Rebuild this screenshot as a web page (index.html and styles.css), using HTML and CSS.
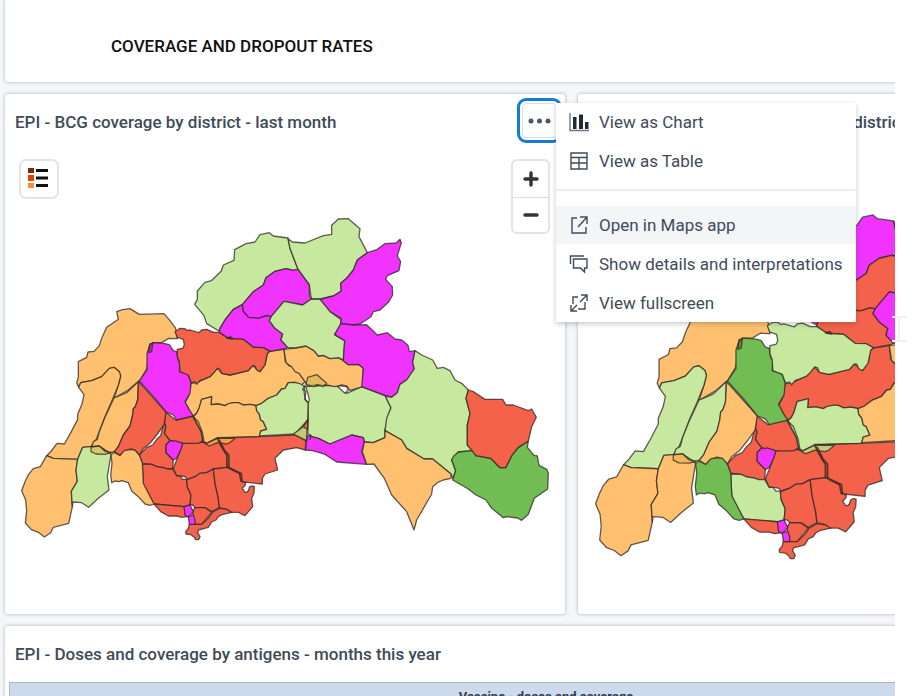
FILE: index.html
```html
<!DOCTYPE html>
<html lang="en">
<head>
<meta charset="utf-8">
<title>EPI dashboard</title>
<link rel="stylesheet" href="styles.css">
</head>
<body>
<main class="dashboard">
  <section class="card card-heading">
    <h1>COVERAGE AND DROPOUT RATES</h1>
  </section>

  <div class="map-row">
    <section class="card map-card">
      <header class="card-header">
        <h2>EPI - BCG coverage by district - last month</h2>
        <div class="actions">
          <button class="more" type="button" aria-label="More options" aria-expanded="true">
            <svg width="24" height="6" viewBox="0 0 24 6"><circle cx="3" cy="3" r="2.5"/><circle cx="11.500" cy="3" r="2.5"/><circle cx="20" cy="3" r="2.5"/></svg>
          </button>
          <div class="menu">
            <button type="button"><svg viewBox="0 0 20 20"><path class="axis" d="M1 1v17.500h19"/><path class="solid" d="M4 5h3.500v12H4zM10 2.500h4V17h-4zM16 10h3.500v7H16z"/></svg>View as Chart</button>
            <button type="button"><svg viewBox="0 0 20 20"><path d="M2 2h16v16H2zM2 6.500h16M2 12h16M10 6.500V18"/></svg>View as Table</button>
            <hr>
            <button type="button" class="active"><svg viewBox="0 0 20 20"><path d="M8 3H3v15h14v-6M11 2h7v7M18 2L9 12"/></svg>Open in Maps app</button>
            <button type="button"><svg viewBox="0 0 20 20"><path d="M1.500 10V2H15M4.500 5H18v9h-2.500v4l-4-4h-7z"/></svg>Show details and interpretations</button>
            <button type="button"><svg viewBox="0 0 20 20"><path d="M9 4H4v7M9 16h7V9M12 2h6v6M18 2l-7 7M2 12v6h6M2 18l6-6"/></svg>View fullscreen</button>
          </div>
        </div>
      </header>
      <div class="map">
        <svg class="districts" viewBox="45 450 1620 1365" role="img" aria-label="Coverage by district">
          <g id="districts">
            <g transform="translate(390 1110)">
              <path class="f-or" d="M412-50L420-56 462-62 466-25 478-12 495-10 512 15 525 35 515 45 495 37 475 38 465 55 455 57 440 75 415 85 395 100 380 107 360 103 340 105 325 98 310 98 285 107 265 102 243 104 245 80 215 88 207 115 200 130 188 138 175 115 165 98 175 80 183 40 200 38 240 20 262-5 275 10 300 15 355 2 368-13 390 5 405-18Z"/>
              <path class="f-og" d="M245 80L243 104 265 102 285 107 295 101 310 98 325 98 340 105 360 103 378 107 380 122 388 132 392 150 400 155 410 178 392 183 388 200 300 202 262 203 230 220 218 212 213 185 190 140 200 130 207 115 215 88Z"/>
              <path class="f-go" d="M378 107L395 100 415 85 440 75 455 57 465 55 475 38 495 37 512 42 525 50 522 65 527 90 535 100 533 150 495 192 388 198 392 183 410 178 400 155 392 150 388 132 380 122Z"/>
              <path class="f-gg" d="M527 50L560 48 580 46 620 47 635 55 650 70 695 50 766 78 783 113 773 145 765 180 765 203 730 218 703 216 700 203 665 195 600 222 565 205 545 200 533 190 535 150 535 100 538 88 532 65Z"/>
              <path class="f-mm" d="M533 196L545 200 565 205 600 222 665 195 700 203 703 216 695 245 710 283 620 276 585 253 548 242 526 240Z"/>
              <path class="f-rr" d="M262 205L300 203 388 200 495 195 527 212 526 240 500 233 460 240 435 265 443 300 405 312 397 325 397 342 335 335 330 312 296 292 295 260 280 240Z"/>
              <path class="f-rr" d="M158 220L215 216 230 220 262 207 280 240 292 258 292 292 250 297 230 308 210 310 195 320 172 328 165 320 150 318 140 318 130 295 140 270Z"/>
              <path class="f-rr" d="M107 126L137 150 187 138 213 185 218 213 205 220 160 220 120 212 103 190 107 170 103 160Z"/>
              <path class="f-rr" d="M103 155L107 170 103 190 120 212 108 225 108 248 130 270 128 297 112 297 100 293 80 290 65 283 37 280 28 255 50 232 68 225 80 208 92 197Z"/>
              <path class="f-rg" d="M37 282L65 283 80 290 100 293 112 297 128 297 140 318 150 318 158 328 170 328 172 350 183 375 180 405 162 410 72 402 40 345Z"/>
              <path class="f-rr" d="M170 330L195 320 210 310 230 308 250 297 255 340 265 385 268 413 245 425 225 413 195 413 188 405 180 405 183 375 172 350Z"/>
              <path class="f-rr" d="M250 297L292 292 305 300 330 312 335 335 347 338 346 345 337 355 345 367Q356 368 358 352Q365 345 373 350L372 370 365 385 368 410 345 437 325 427 300 427 290 418 268 413 265 385 255 340Z"/>
              <path class="f-rr" d="M72 402L162 410 170 440 155 442 140 438 115 438 92 425Z"/>
              <path class="f-rr" d="M195 413L225 413 245 427 215 463 195 463 190 445 188 425Z"/>
              <path class="f-rr" d="M178 463L215 463 235 445 247 427 268 415 290 418 305 427 275 434 265 440 258 450 245 456 235 472 205 480 203 488 210 500 206 509 197 509 193 502 183 494 168 492 167 485 175 475Z"/>
              <path class="f-mm" d="M120 212L128 214 135 212 158 220 152 240 140 265 130 270 108 248 108 225Z"/>
              <path class="f-mm" d="M162 410L180 405 190 425 175 442 165 435Z"/>
              <path class="f-mm" d="M175 440L190 435 195 450 195 463 178 463Z"/>
              <path class="f-lens" d="M215 214L230 220 262 205 315 205 300 218 290 222 262 218 238 228Z"/>
              <path class="f-seam" d="M262 207L280 240 290 255 290 292 297 292 297 255 285 242 270 212Z"/>
              <path class="f-seam" d="M296 292L328 308 332 333 337 335 334 310Z"/>
              <path class="f-khaki" d="M490 192L520 170 533 150 529 212Z"/>
              <path class="f-rr" d="M520 170L533 150 533 178Z"/>
              <path class="f-none" d="M190 140L205 155 218 190 222 214M525 45L518 58 528 64 524 88 533 96M540 210L543 193"/>
              <path class="f-water" d="M620 47L650 50 655 60 645 70Z"/>
            </g>
            <g transform="translate(30 900)">
              <path class="f-oo" d="M205 185L230 172 234 156 252 154 268 137 275 115 290 82 325 58 320 35 338 29 360 26 388 43 462 41 480 62 497 85 502 116 476 115 455 128 428 128 418 140 411 205 390 240 355 270 312 295 325 255 332 228 328 215 312 202 298 205 275 230 245 242 212 248 206 262 200 248 205 232Z"/>
              <path class="f-og" d="M206 262L212 248 245 242 275 230 298 205 312 202 328 215 332 228 325 255 308 297 285 350 266 400 258 420 243 440 218 442 203 478 130 475 110 467 124 453 141 430 163 432 184 395 203 358 203 343 216 312 222 284Z"/>
              <path class="f-og" d="M312 294L350 278 385 245 383 300 376 320 370 326 368 345 360 378 340 405 325 440 313 455 298 458 270 440 245 441 250 425 262 418 268 395 285 352Z"/>
              <path class="f-oo" d="M110 467L130 475 203 478 198 510 202 544 184 574 187 620 176 670 130 682 122 698 103 711 85 697 64 689 46 669 50 632 47 600 35 572 45 545 55 524 70 506 91 500Z"/>
              <path class="f-go" d="M218 442L243 440 268 438 285 455 303 462 297 500 292 530 297 570 265 595 236 622 215 608 189 606 187 620 184 574 202 544 198 510 203 478Z"/>
              <path class="f-od" d="M303 465L308 459 313 458 330 466 343 450 375 448 388 465 397 490 400 550 432 612 420 616 405 612 385 590 365 573 355 548 335 542 327 545 315 543 305 548 302 525 306 490Z"/>
              <path class="f-ro" d="M386 245L468 336 462 375 440 405 420 430 400 445 388 465 375 450 360 447 343 452 330 466 313 455 325 440 340 405 360 378 368 345 370 326 376 320 383 300Z"/>
              <path class="f-md" d="M428 128L460 130 478 134 490 152 500 155 504 180 510 190 508 215 525 220 535 225 543 248 540 280 525 305 538 330 550 348 500 360 490 345 468 336 435 295 388 243 411 210 411 160 418 140Z"/>
              <path class="f-lens2" d="M243 441L268 438 285 453 303 458 285 463 258 462 243 455Z"/>
              <path class="f-seam2" d="M419 132L428 130 425 155 416 158Z"/>
            </g>
            <g transform="translate(540 630)">
              <path class="f-oo" d="M312 418L345 414 378 408 402 422 415 438 430 436 450 446 475 443 490 452 505 464 535 463 550 475 548 530 510 541 500 528 485 525 465 530 440 525 380 525 375 515 357 490 345 485 335 470 318 458Z"/>
              <path class="f-gm" d="M324 84L280 78 268 68 240 74 225 96 198 101 164 119 162 151 130 165 124 183 94 212 75 217 52 243 52 268 44 283 72 317 80 341 117 363 120 355 135 330 160 298 187 284 220 245 250 225 258 203 285 184 318 176 340 181 354 178 340 142 330 115Z"/>
              <path class="f-go" d="M324 86L337 96 375 99 430 77 455 73 455 46 475 27 505 26 540 56 537 80 562 128 532 150 520 180 500 205 482 220 484 243 460 258 420 267 394 267 388 225 354 178 330 115Z"/>
              <path class="f-mm" d="M562 128L590 119 614 101 648 99 660 88 664 98 652 138 662 155 657 182 622 197 617 208 637 230 638 255 625 277 600 300 580 305 573 320 540 342 520 345 482 341 484 326 450 305 420 268 460 258 484 243 482 220 500 205 520 180 532 150Z"/>
              <path class="f-mr" d="M354 178L388 225 388 255 394 267 368 285 312 274 275 320 260 317 235 325 205 322 189 303 187 284 220 245 250 225 258 203 285 184 318 176 340 181Z"/>
              <path class="f-mr" d="M187 284L189 303 205 322 235 325 260 317 275 320 268 332 285 355 308 372 303 390 323 410 318 415 270 424 250 413 220 412 190 388 145 385 117 367 120 355 135 330 160 298Z"/>
              <path class="f-gm" d="M312 274L368 285 394 267 420 268 450 305 482 328 482 345 464 374 494 392 490 450 475 443 450 446 430 436 415 438 402 422 378 408 345 414 323 412 303 390 308 372 285 355 268 332 275 318Z"/>
              <path class="f-mm" d="M482 341L520 345 560 344 592 375 622 368 645 387 665 390 684 406 688 425 705 422 698 458 703 477 680 510 660 523 652 548 635 562 616 556 545 530 550 475 535 463 505 464 490 452 494 392 464 374Z"/>
              <path class="f-rg" d="M-15 365L0 355 15 356 20 361 30 360 57 368 65 360 80 358 100 367 117 367 145 385 190 388 220 412 250 413 270 424 262 430 255 465 240 485 230 480 225 468 218 467 205 482 150 495 125 490 120 478 112 475 100 490 90 500 70 508 60 511 50 523 45 516 34 518 25 495 0 485 -2 455 -8 440 -8 418 8 415 13 405 10 388 -8 382Z"/>
              <path class="f-seam" d="M140 384L152 380 158 387Z"/>
              <path class="f-lens2" d="M378 524L383 502 411 494 440 520 430 530 412 524 400 530Z"/>
            </g>
            <g transform="translate(1050 1020)">
              <path class="f-gg" d="M195 32L215 45 248 60 262 85 280 82 300 92 315 120 335 130 355 150 348 175 360 220 352 255 352 315 368 332 325 336 305 360 317 392 308 415 303 402 248 357 222 357 170 325 155 300 105 272 110 235 123 203 106 168 125 172 142 158 150 133 170 120 193 87 188 68Z"/>
              <path class="f-dd" d="M368 332L378 347 422 355 450 383 467 383 485 347 505 322 535 303 532 322 552 346 562 348 567 376 590 388 595 400 593 447 553 475 535 523 515 541 503 534 470 530 460 533 425 505 408 480 378 465 355 447 308 420 317 392 305 360 312 347 325 336Z"/>
              <path class="f-rr" d="M355 150L370 155 405 178 458 178 468 195 490 195 535 212 545 207 559 232 545 260 535 303 505 322 485 347 467 383 450 383 422 355 378 347 352 315 352 255 360 220 348 175Z"/>
              <path class="f-oo" d="M105 272L155 300 170 325 222 357 248 357 303 402 303 415 280 420 262 428 248 440 245 462 200 540 192 570 170 515 125 465 103 415 72 372 50 373 37 335 43 306 70 308 105 293Z"/>
            </g>
          </g>
        </svg>
        <button class="legend" type="button" aria-label="Legend">
          <svg width="20" height="20" viewBox="0 0 20 20"><path fill="#7f2704" d="M0 0h6v5H0z"/><path fill="#d94801" d="M0 7h6v6H0z"/><path fill="#fd8d3c" d="M0 15h6v5H0z"/><path fill="#111" d="M8 1h12v3H8zM8 8.500h12v3H8zM8 16h12v3H8z"/></svg>
        </button>
        <div class="zoom">
          <button type="button" aria-label="Zoom in"><svg width="16" height="16" viewBox="0 0 16 16"><path d="M8 2v12M2 8h12"/></svg></button>
          <button type="button" aria-label="Zoom out"><svg width="16" height="16" viewBox="0 0 16 16"><path d="M2 8h12"/></svg></button>
        </div>
      </div>
    </section>

    <section class="card map-card">
      <header class="card-header">
        <h2>EPI - Measles under 1 coverage by district</h2>
      </header>
      <div class="map">
        <svg class="districts districts-second" viewBox="45 524 1446 1219" role="img" aria-label="Coverage by district"><use href="#districts"/></svg>
      </div>
    </section>
  </div>

  <section class="card table-card">
    <header class="card-header">
      <h2>EPI - Doses and coverage by antigens - months this year</h2>
    </header>
    <table>
      <thead><tr><th scope="col">Vaccine - doses and coverage</th></tr></thead>
    </table>
  </section>
</main>
<svg class="caret" width="16" height="26" viewBox="0 0 16 26"><path d="M1 1h5l2 1 2-1h5M8 2v22M1 25h5l2-1 2 1h5"/></svg>
</body>
</html>
```
FILE: styles.css
```css
* { box-sizing: border-box; }

body {
  margin: 0;
  height: 100vh;
  overflow: hidden;
  background: #fff;
  color: #404b5a;
  font-family: Roboto, "Liberation Sans", sans-serif;
  font-size: 17px;
}

h1, h2 { margin: 0; font-size: 17px; font-weight: 500; line-height: 20px; white-space: nowrap; }

button { font: inherit; color: inherit; cursor: pointer; }

.dashboard {
  display: flex;
  flex-direction: column;
  gap: 12px;
  height: 100%;
  margin-right: 26px;
  padding-left: 5px;
  overflow: hidden;
  background: #f4f6f8;
}

.card {
  flex: none;
  background: #fff;
  border-radius: 3px;
  box-shadow: 0 0 3px 1px #c9cdd2;
}

.card-heading {
  min-width: 1135px;
  padding: 36px 106px 26px;
  border-radius: 0 0 3px 3px;
}

.card-heading h1 { color: #111; }

.map-row {
  display: grid;
  grid-template-columns: repeat(2, minmax(560px, 1fr));
  gap: 13px;
}

.card-header {
  display: flex;
  justify-content: space-between;
  height: 56px;
  padding: 9px 8px 0 10px;
}

.card-header h2 { padding-top: 9px; }

.map-card { padding-bottom: 9px; }

.actions { position: relative; }

.more {
  display: flex;
  align-items: center;
  justify-content: center;
  width: 35px;
  height: 35px;
  padding: 0;
  background: #fff;
  border: 1px solid #d5dde5;
  border-radius: 4px;
  outline: 3px solid #147cd7;
  outline-offset: 2px;
}

.more svg { fill: #4a5768; }

.menu {
  position: absolute;
  z-index: 2;
  top: 0;
  left: 34px;
  display: flex;
  flex-direction: column;
  gap: 1px;
  width: 300px;
  background: #fff;
  box-shadow: 0 2px 5px rgba(33, 41, 52, .25);
}

.menu button {
  display: flex;
  align-items: center;
  gap: 10px;
  width: 100%;
  height: 38px;
  padding: 0 13px;
  border: 0;
  background: none;
  white-space: nowrap;
}

.menu .active { background: #f3f5f7; }

.menu svg { flex: none; width: 20px; height: 20px; fill: none; stroke: #404b5a; stroke-width: 1.4; }
.menu .solid { fill: #212934; stroke: none; }
.menu .axis { stroke: #6c7787; }

.menu hr { width: 100%; height: 2px; margin: 8px 0 14px; border: 0; background: #e8edf2; }

.map { position: relative; padding: 0 10px; }

.districts {
  display: block;
  width: 100%;
  height: 455px;
  --orange: #ffc170;
  --green: #c7e99f;
  --dark: #72bd53;
  --red: #f4624b;
  --magenta: #f033ff;
}

.districts path { stroke: rgba(45, 40, 35, .75); stroke-width: 1.3px; stroke-linejoin: round; vector-effect: non-scaling-stroke; }

/* Each class names the fill in the first and second map; the second map overrides it. */
.f-oo { fill: var(--orange); }
.f-gg { fill: var(--green); }
.f-mm { fill: var(--magenta); }
.f-rr { fill: var(--red); }
.f-dd { fill: var(--dark); }
.f-og { fill: var(--og, var(--orange)); }
.f-or { fill: var(--or, var(--orange)); }
.f-od { fill: var(--od, var(--orange)); }
.f-go { fill: var(--go, var(--green)); }
.f-gm { fill: var(--gm, var(--green)); }
.f-ro { fill: var(--ro, var(--red)); }
.f-rg { fill: var(--rg, var(--red)); }
.f-md { fill: var(--md, var(--magenta)); }
.f-mr { fill: var(--mr, var(--magenta)); }
.f-lens { fill: var(--lens, #f99a45); }
.f-lens2 { fill: var(--lens2, #d9b65a); fill-opacity: .7; }
.f-seam { fill: #a8452f; }
.f-seam2 { fill: #6b4a40; fill-opacity: .45; }
.f-khaki { fill: #c5c977; }
.f-water { fill: #fff; }
.f-none { fill: none; }

.districts-second {
  --og: var(--green);
  --or: var(--red);
  --od: var(--dark);
  --go: var(--orange);
  --gm: var(--magenta);
  --ro: var(--orange);
  --rg: var(--green);
  --md: var(--dark);
  --mr: var(--red);
  --lens: #c5c977;
  --lens2: #eeb14e;
}

.legend {
  position: absolute;
  top: 9px;
  left: 14px;
  display: flex;
  align-items: center;
  justify-content: center;
  width: 40px;
  height: 40px;
  padding: 0 2px 2px 0;
  background: #fff;
  border: 2px solid #e4e4e4;
  border-radius: 7px;
}

.zoom {
  position: absolute;
  top: 9px;
  right: 15px;
  width: 39px;
  border: 2px solid #e4e4e4;
  border-radius: 6px;
  background: #fff;
}

.zoom button {
  display: flex;
  align-items: center;
  justify-content: center;
  width: 100%;
  height: 36px;
  padding: 0;
  border: 0;
  background: none;
}

.zoom button + button { height: 35px; border-top: 1px solid #ddd; }

.zoom path { stroke: #333; stroke-width: 3.4; stroke-linecap: round; }

.table-card { min-width: 1135px; padding: 0 4px; }

.table-card .card-header { padding-left: 6px; }

table { width: 1074px; border-collapse: collapse; }

th {
  height: 28px;
  padding: 0;
  border: 1px solid #aeb4bd;
  background: #cdd9ed;
  color: #333c48;
  font-size: 13px;
  font-weight: 700;
}

.caret {
  position: absolute;
  top: 316px;
  left: 891px;
  fill: none;
  stroke: #eef0f2;
  stroke-width: 2;
}
```
